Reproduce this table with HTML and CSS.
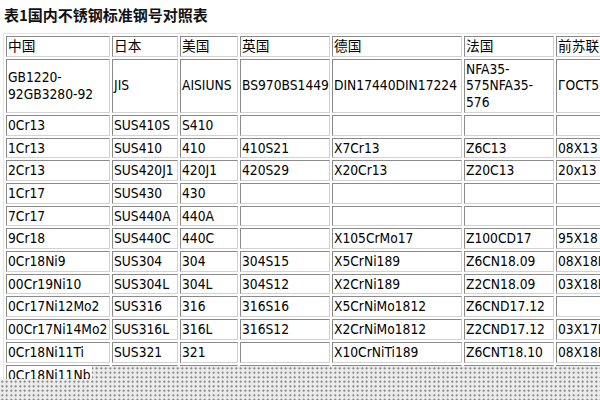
FILE: index.html
```html
<!DOCTYPE html>
<html lang="zh-CN">
<head>
<meta charset="utf-8">
<title>表1国内不锈钢标准钢号对照表</title>
<link rel="stylesheet" href="styles.css">
</head>
<body>
<h1 class="title">表1国内不锈钢标准钢号对照表</h1>
<table class="grid">
  <tr>
    <td class="c1">中国</td>
    <td class="c2">日本</td>
    <td class="c3">美国</td>
    <td class="c4">英国</td>
    <td class="c5">德国</td>
    <td class="c6">法国</td>
    <td class="c7">前苏联</td>
  </tr>
  <tr class="std">
    <td>GB1220-92GB3280-92</td>
    <td>JIS</td>
    <td>AISIUNS</td>
    <td>BS970BS1449</td>
    <td>DIN17440DIN17224</td>
    <td>NFA35-575NFA35-576</td>
    <td>ГОСТ5632-72</td>
  </tr>
  <tr><td>0Cr13</td><td>SUS410S</td><td>S410</td><td></td><td></td><td></td><td></td></tr>
  <tr><td>1Cr13</td><td>SUS410</td><td>410</td><td>410S21</td><td>X7Cr13</td><td>Z6C13</td><td>08X13</td></tr>
  <tr><td>2Cr13</td><td>SUS420J1</td><td>420J1</td><td>420S29</td><td>X20Cr13</td><td>Z20C13</td><td>20x13</td></tr>
  <tr><td>1Cr17</td><td>SUS430</td><td>430</td><td></td><td></td><td></td><td></td></tr>
  <tr><td>7Cr17</td><td>SUS440A</td><td>440A</td><td></td><td></td><td></td><td></td></tr>
  <tr><td>9Cr18</td><td>SUS440C</td><td>440C</td><td></td><td>X105CrMo17</td><td>Z100CD17</td><td>95X18</td></tr>
  <tr><td>0Cr18Ni9</td><td>SUS304</td><td>304</td><td>304S15</td><td>X5CrNi189</td><td>Z6CN18.09</td><td>08X18H10</td></tr>
  <tr><td>00Cr19Ni10</td><td>SUS304L</td><td>304L</td><td>304S12</td><td>X2CrNi189</td><td>Z2CN18.09</td><td>03X18H11</td></tr>
  <tr><td>0Cr17Ni12Mo2</td><td>SUS316</td><td>316</td><td>316S16</td><td>X5CrNiMo1812</td><td>Z6CND17.12</td><td></td></tr>
  <tr><td>00Cr17Ni14Mo2</td><td>SUS316L</td><td>316L</td><td>316S12</td><td>X2CrNiMo1812</td><td>Z2CND17.12</td><td>03X17H14M2</td></tr>
  <tr><td>0Cr18Ni11Ti</td><td>SUS321</td><td>321</td><td></td><td>X10CrNiTi189</td><td>Z6CNT18.10</td><td>08X18H10T</td></tr>
  <tr><td>0Cr18Ni11Nb</td><td>SUS347</td><td>347</td><td>347S17</td><td>X10CrNiNb189</td><td>Z6CNNb18.10</td><td>08X18H12Б</td></tr>
</table>
<div class="mask" aria-hidden="true"></div>
</body>
</html>
```
FILE: styles.css
```css
html, body {
  margin: 0;
  padding: 0;
  background: #ffffff;
  overflow: hidden;
}

body {
  width: 600px;
  height: 400px;
  position: relative;
  color: #000000;
  font-family: "DejaVu Sans Condensed", "DejaVu Sans", "Noto Sans CJK SC", sans-serif;
  font-stretch: condensed;
}

.title {
  margin: 0;
  padding: 5px 0 0 4px;
  font-family: "Noto Sans CJK SC", sans-serif;
  font-stretch: normal;
  font-size: 15px;
  font-weight: bold;
  line-height: 20px;
  color: #111111;
}

.grid {
  margin: 8px 0 0 3px;
  table-layout: fixed;
  width: 676px;
  border-collapse: separate;
  border-spacing: 2px;
  border-style: solid;
  border-width: 1px;
  border-color: #e4e4e4 #9a9a9a #9a9a9a #e4e4e4;
  font-size: 13.7px;
  line-height: 16.7px;
}

.grid td {
  box-sizing: border-box;
  padding: 1px;
  border-style: solid;
  border-width: 1px;
  border-color: #8a8a8a #d2d2d2 #d2d2d2 #8a8a8a;
  text-align: left;
  vertical-align: middle;
  white-space: nowrap;
  overflow: visible;
}

.grid .std td {
  white-space: normal;
}

.grid .std td:nth-child(4),
.grid .std td:nth-child(5) {
  white-space: nowrap;
}

.c1 { width: 104px; }
.c2 { width: 66px; }
.c3 { width: 58px; }
.c4 { width: 90px; }
.c5 { width: 130px; }
.c6 { width: 90px; }
.c7 { width: 120px; }

.mask {
  position: absolute;
  left: 0;
  top: 366px;
  width: 600px;
  height: 34px;
  background-color: #ececec;
  background-image: radial-gradient(circle, #6f6f6f 0.7px, rgba(0, 0, 0, 0) 1.3px);
  background-size: 4.5px 4.5px;
  clip-path: polygon(92px 0, 100% 0, 100% 100%, 0 100%, 0 13px, 92px 13px);
}
```
